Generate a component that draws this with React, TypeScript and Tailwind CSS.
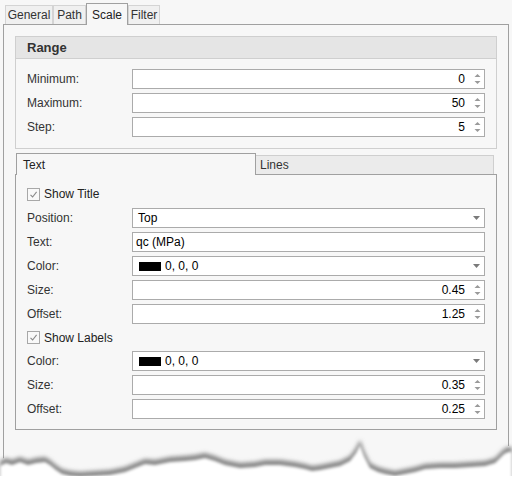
import React from "react";

const font = { fontFamily: '"Liberation Sans", Arial, sans-serif' };

const tornPoints: [number, number][] = [
  [0, 460], [6, 457], [12, 459], [20, 456], [28, 459], [36, 457], [45, 456], [50, 459],
  [56, 464], [62, 468], [70, 470], [80, 471], [95, 470], [110, 469], [125, 466], [135, 462],
  [145, 458], [155, 459], [170, 456], [185, 455], [195, 454], [205, 452], [215, 455],
  [225, 459], [240, 462], [255, 461], [265, 459], [280, 459], [295, 461], [305, 463],
  [312, 465], [320, 464], [330, 462], [340, 460], [350, 455], [356, 447], [360, 439],
  [364, 450], [370, 462], [378, 466], [385, 468], [395, 470], [405, 468], [415, 466],
  [425, 463], [440, 462], [455, 462], [470, 461], [485, 460], [495, 457], [500, 452],
  [504, 448], [508, 446], [512, 446],
];

function tornPath(dy: number) {
  const pts = tornPoints.map(([x, y]) => `${x},${y + dy}`).join(" L");
  return `M${pts} L512,479 L0,479 Z`;
}

function Spinner() {
  return (
    <svg width="7" height="12" viewBox="0 0 7 12" className="shrink-0">
      <path d="M3.5 1 L6.5 4 L0.5 4 Z" fill="#9a9a9a" />
      <path d="M0.5 8 L6.5 8 L3.5 11 Z" fill="#9a9a9a" />
    </svg>
  );
}

function Caret() {
  return (
    <svg width="7" height="4" viewBox="0 0 7 4" className="shrink-0">
      <path d="M0 0 L7 0 L3.5 4 Z" fill="#7a7a7a" />
    </svg>
  );
}

function NumberBox({ value }: { value: string }) {
  return (
    <div className="flex h-[20px] w-[353px] items-center border border-[#ababab] bg-white pr-[3px]">
      <span className="flex-1 pr-[9px] text-right text-black">{value}</span>
      <Spinner />
    </div>
  );
}

function SelectBox({ children }: { children: React.ReactNode }) {
  return (
    <div className="flex h-[20px] w-[353px] items-center border border-[#ababab] bg-white pl-[5px] pr-[4px]">
      <div className="flex flex-1 items-center text-black">{children}</div>
      <Caret />
    </div>
  );
}

function TextBox({ value }: { value: string }) {
  return (
    <div className="flex h-[20px] w-[353px] items-center border border-[#ababab] bg-white pl-[3px] text-black">
      {value}
    </div>
  );
}

function Row({ label, children }: { label: string; children: React.ReactNode }) {
  return (
    <div className="flex h-[20px] items-center">
      <span className="w-[105px] shrink-0 text-[#333]">{label}</span>
      {children}
    </div>
  );
}

function Check({ label, tight }: { label: string; tight?: boolean }) {
  return (
    <div className={`flex ${tight ? "h-[19px]" : "h-[20px]"} items-center gap-[4px]`}>
      <span className="flex h-[13px] w-[13px] items-center justify-center border border-[#a8a8a8] bg-[#f9f9f9]">
        <svg width="9" height="9" viewBox="0 0 9 9">
          <path d="M1.5 4.8 L3.6 7 L7.6 1.8" fill="none" stroke="#8a8a8a" strokeWidth="1.1" />
        </svg>
      </span>
      <span className="text-[#222]">{label}</span>
    </div>
  );
}

function Swatch({ text }: { text: string }) {
  return (
    <>
      <span className="ml-px mr-[4px] inline-block h-[9px] w-[22px] bg-black" />
      <span>{text}</span>
    </>
  );
}

const tabs = [
  { name: "General", w: "w-[48px]" },
  { name: "Path", w: "w-[33px]" },
  { name: "Scale", w: "w-[42px]", active: true },
  { name: "Filter", w: "w-[32px]" },
];

export default function App() {
  return (
    <div
      className="relative h-[479px] w-[512px] overflow-hidden bg-[#f7f7f7] text-[12px] leading-none"
      style={font}
    >
      {/* Top tab strip */}
      <div className="flex items-end pl-[5px] pt-[3px]">
        {tabs.map((t) =>
          t.active ? (
            <div
              key={t.name}
              className={`relative z-10 -mb-px flex h-[22px] ${t.w} items-center justify-center border border-b-0 border-[#a0a0a0] bg-[#f7f7f7] text-[#222]`}
            >
              {t.name}
            </div>
          ) : (
            <div
              key={t.name}
              className={`flex h-[19px] ${t.w} items-center justify-center border border-b-0 border-[#d4d4d4] bg-[#f0f0f0] text-[#333]`}
            >
              {t.name}
            </div>
          )
        )}
      </div>

      {/* Main panel */}
      <div className="ml-[3px] h-[460px] w-[506px] border border-[#a0a0a0] bg-[#f7f7f7] pl-[11px] pt-[11px]">
        {/* Range group */}
        <div className="w-[482px] border border-[#cfcfcf]">
          <div className="flex h-[22px] items-center border-b border-[#cfcfcf] bg-[#e5e5e5] pl-[11px] text-[13px] font-bold text-[#333]">
            Range
          </div>
          <div className="flex flex-col gap-[4px] px-[11px] pb-[11px] pt-[10px]">
            <Row label="Minimum:">
              <NumberBox value="0" />
            </Row>
            <Row label="Maximum:">
              <NumberBox value="50" />
            </Row>
            <Row label="Step:">
              <NumberBox value="5" />
            </Row>
          </div>
        </div>

        {/* Text / Lines tabs */}
        <div className="mt-[4px] flex items-end pl-px">
          <div className="relative z-10 -mb-px flex h-[22px] w-[240px] items-center border border-b-0 border-[#a0a0a0] bg-[#f7f7f7] pl-[6px] text-[#222]">
            Text
          </div>
          <div className="flex h-[19px] w-[238px] items-center border border-b-0 border-l-0 border-[#cfcfcf] bg-[#ebebeb] pl-[4px] text-[#333]">
            Lines
          </div>
        </div>
        <div className="flex w-[482px] flex-col gap-[4px] border border-[#a0a0a0] px-[11px] pb-[10px] pt-[9px]">
          <Check label="Show Title" />
          <Row label="Position:">
            <SelectBox>Top</SelectBox>
          </Row>
          <Row label="Text:">
            <TextBox value="qc (MPa)" />
          </Row>
          <Row label="Color:">
            <SelectBox>
              <Swatch text="0, 0, 0" />
            </SelectBox>
          </Row>
          <Row label="Size:">
            <NumberBox value="0.45" />
          </Row>
          <Row label="Offset:">
            <NumberBox value="1.25" />
          </Row>
          <Check label="Show Labels" tight />
          <Row label="Color:">
            <SelectBox>
              <Swatch text="0, 0, 0" />
            </SelectBox>
          </Row>
          <Row label="Size:">
            <NumberBox value="0.35" />
          </Row>
          <Row label="Offset:">
            <NumberBox value="0.25" />
          </Row>
        </div>
      </div>

      {/* Torn paper edge */}
      <svg
        className="absolute left-0 top-0"
        width="512"
        height="479"
        viewBox="0 0 512 479"
      >
        <defs>
          <filter id="soft" x="-5%" y="-50%" width="110%" height="200%">
            <feGaussianBlur stdDeviation="2.2" />
          </filter>
          <filter id="soft2" x="-5%" y="-50%" width="110%" height="200%">
            <feGaussianBlur stdDeviation="1.6" />
          </filter>
        </defs>
        <path d={tornPath(0)} fill="#f7f7f7" />
        <path d={tornPath(1)} fill="#858585" filter="url(#soft)" />
        <path d={tornPath(6)} fill="#ffffff" filter="url(#soft2)" />
        <rect x="0" y="476" width="512" height="3" fill="#ffffff" />
      </svg>
    </div>
  );
}
